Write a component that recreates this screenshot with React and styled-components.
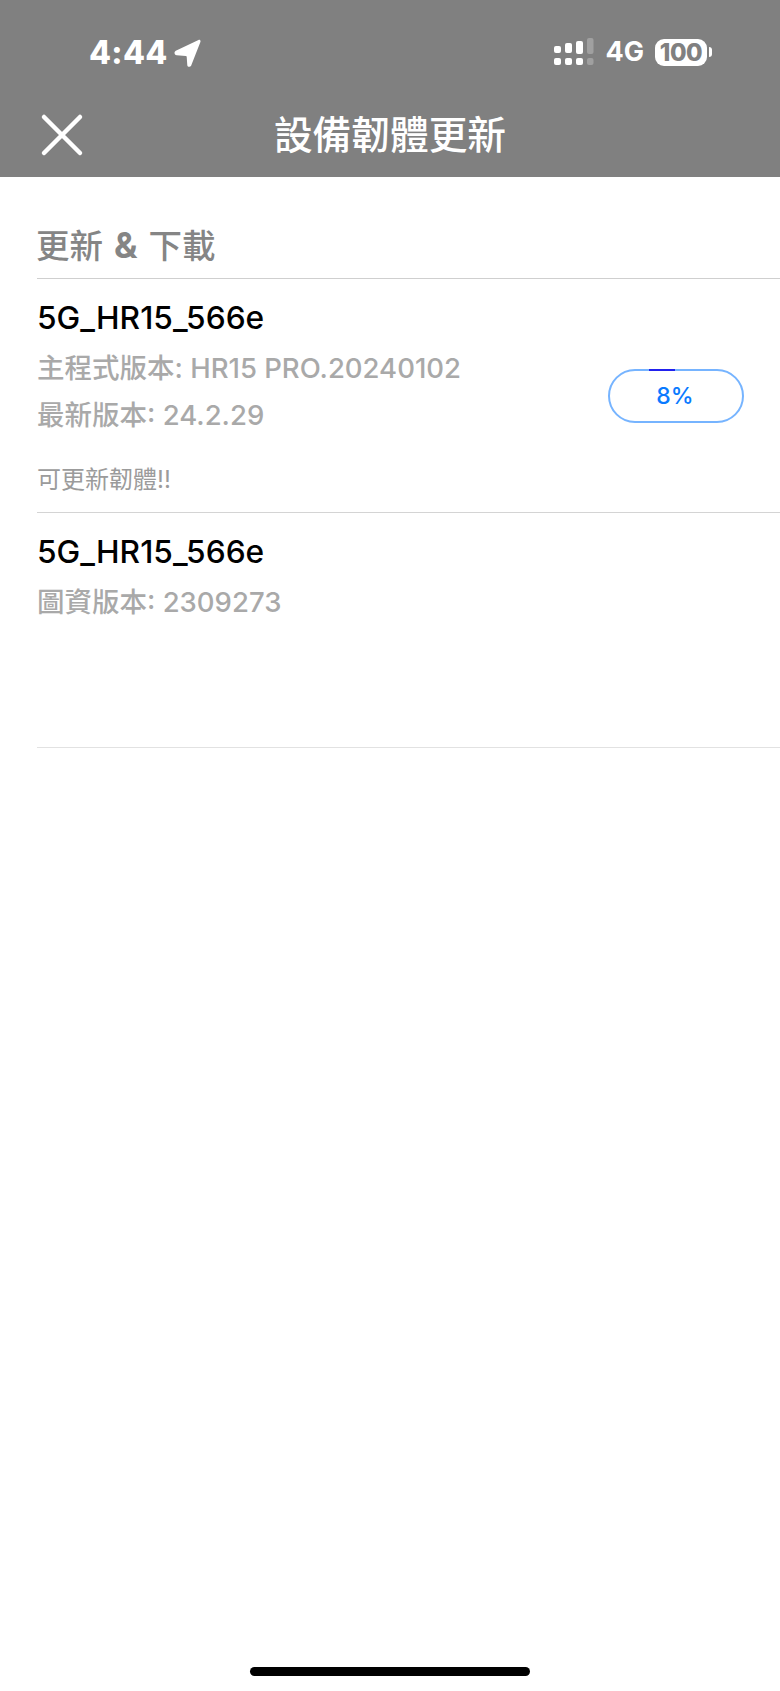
import React from 'react';
import styled, { createGlobalStyle } from 'styled-components';

const GlobalStyle = createGlobalStyle`
  html, body {
    margin: 0;
    padding: 0;
    background: #fff;
  }
  body {
    font-family: Inter, "Noto Sans CJK TC", sans-serif;
  }
`;

const Page = styled.div`
  width: 780px;
  height: 1691px;
  display: flex;
  flex-direction: column;
  overflow: hidden;
  background: #fff;
`;

const Header = styled.header`
  height: 177px;
  flex-shrink: 0;
  background: #808080;
  color: #fff;
  display: flex;
  flex-direction: column;
`;

const StatusBar = styled.div`
  height: 106px;
  padding: 38px 68px 0 89px;
  box-sizing: border-box;
  display: flex;
  justify-content: space-between;
  align-items: flex-start;
`;

const StatusLeft = styled.div`
  display: flex;
  align-items: center;
  gap: 6px;
  height: 30px;
`;

const Time = styled.span`
  font-size: 32px;
  font-weight: 800;
  line-height: 30px;
  letter-spacing: 0.3px;
`;

const StatusRight = styled.div`
  display: flex;
  align-items: center;
  height: 30px;
  margin-top: -1px;
`;

const Network = styled.span`
  font-size: 27px;
  font-weight: 700;
  line-height: 30px;
  margin: 0 11px 0 11px;
`;

const Battery = styled.div`
  width: 52px;
  height: 27px;
  border-radius: 9px;
  background: #fff;
  color: #808080;
  font-size: 24px;
  font-weight: 800;
  line-height: 27px;
  text-align: center;
  letter-spacing: -0.5px;
`;

const BatteryCap = styled.div`
  width: 3px;
  height: 10px;
  margin-left: 2px;
  background: #fff;
  border-radius: 0 3px 3px 0;
`;

const NavBar = styled.div`
  flex: 1;
  position: relative;
  display: flex;
  align-items: flex-start;
  justify-content: center;
`;

const CloseButton = styled.button`
  position: absolute;
  left: 40px;
  top: 7px;
  width: 44px;
  height: 44px;
  padding: 0;
  border: 0;
  background: none;
  color: #fff;
`;

const NavTitle = styled.h1`
  margin: 4px 0 0;
  font-size: 38.700px;
  font-weight: 500;
  line-height: 50px;
  color: #fff;
`;

const Section = styled.section`
  margin-left: 37px;
`;

const SectionTitle = styled.h2`
  margin: 0;
  height: 102px;
  box-sizing: border-box;
  padding-top: 46px;
  font-size: 33.500px;
  font-weight: 500;
  line-height: 44px;
  word-spacing: 2px;
  text-indent: -1px;
  color: #858585;
  border-bottom: 1.5px solid #cfcfcf;
`;

const Ampersand = styled.span`
  font-size: 35px;
  font-weight: 700;
`;

const Row = styled.div`
  height: ${(p) => (p.$light ? '234.5px' : '234px')};
  box-sizing: border-box;
  position: relative;
  padding-top: 21px;
  border-bottom: 1.5px solid ${(p) => (p.$light ? '#e2e2e2' : '#d4d4d4')};
`;

const DeviceName = styled.div`
  font-size: 31.700px;
  font-weight: 500;
  line-height: 36px;
  color: #000;
  margin: 0 0 9px;
`;

const Detail = styled.div`
  font-size: 27.500px;
  font-weight: 500;
  line-height: 47px;
  color: #a9a9a9;
`;

const Note = styled.div`
  font-size: 24px;
  font-weight: 400;
  line-height: 30px;
  color: #9b9b9b;
  margin: 26px 0 0;
`;

const ProgressButton = styled.div`
  position: absolute;
  right: 36px;
  top: 90px;
  width: 136px;
  height: 54px;
  box-sizing: border-box;
  border: 2px solid #76b4ff;
  border-radius: 27px;
  background: #fff;
  color: #0a7aff;
  font-size: 23px;
  font-weight: 500;
  padding-right: 2px;
  display: flex;
  align-items: center;
  justify-content: center;
`;

const ProgressMark = styled.span`
  position: absolute;
  top: -2px;
  left: 39px;
  height: 2px;
  background: #2121ee;
`;

const HomeBar = styled.div`
  width: 280px;
  height: 9px;
  margin: auto auto 15px;
  border-radius: 5px;
  background: #000;
`;

const LocationArrow = () => (
  <svg width="27" height="28" viewBox="0 0 27 28" fill="#fff">
    <path d="M24.500 1 1.800 11.800c-2 1-1.600 4.300.9 4.500l9.100.6c.6 0 .9.300.9.900l.6 8.400c.2 1.800 2.800 2.300 3.800.6L26.300 3.200c.7-1.500-.4-2.800-1.800-2.200Z" />
  </svg>
);

const SignalBars = () => (
  <svg width="40" height="28" viewBox="0 0 40 28" fill="#fff">
    <rect x="0" y="8" width="7" height="7" rx="2" />
    <rect x="11" y="5" width="7" height="10" rx="2" />
    <rect x="22" y="3" width="7" height="13" rx="2" />
    <rect x="33" y="0" width="6.500" height="16" rx="2" opacity="0.25" />
    <rect x="0" y="20" width="7" height="7" rx="2" />
    <rect x="11" y="20" width="7" height="7" rx="2" />
    <rect x="22" y="20" width="7" height="7" rx="2" />
    <rect x="33" y="20" width="6.500" height="7" rx="2" opacity="0.25" />
  </svg>
);

const CloseIcon = () => (
  <svg width="44" height="44" viewBox="0 0 44 44" fill="none" stroke="currentColor" strokeWidth="4.500" strokeLinecap="round">
    <path d="M4 4 40 40M40 4 4 40" />
  </svg>
);

const App = () => {
  return (
    <Page>
      <GlobalStyle />
      <Header>
        <StatusBar>
          <StatusLeft>
            <Time>4:44</Time>
            <LocationArrow />
          </StatusLeft>
          <StatusRight>
            <SignalBars />
            <Network>4G</Network>
            <Battery>100</Battery>
            <BatteryCap />
          </StatusRight>
        </StatusBar>
        <NavBar>
          <CloseButton aria-label="close">
            <CloseIcon />
          </CloseButton>
          <NavTitle>設備韌體更新</NavTitle>
        </NavBar>
      </Header>
      <Section>
        <SectionTitle>
          更新 <Ampersand>&amp;</Ampersand> 下載
        </SectionTitle>
        <Row>
          <DeviceName>5G_HR15_566e</DeviceName>
          <Detail>主程式版本: HR15 PRO.20240102</Detail>
          <Detail>最新版本: 24.2.29</Detail>
          <Note>可更新韌體!!</Note>
          <ProgressButton>
            <ProgressMark style={{ width: `${8 * 3.25}px` }} />
            8%
          </ProgressButton>
        </Row>
        <Row $light>
          <DeviceName>5G_HR15_566e</DeviceName>
          <Detail>圖資版本: 2309273</Detail>
        </Row>
      </Section>
      <HomeBar />
    </Page>
  );
};

export default App;
